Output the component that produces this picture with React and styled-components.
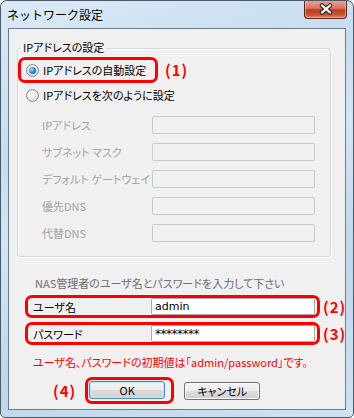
import React from 'react'
import styled, { createGlobalStyle } from 'styled-components'

const GlobalStyle = createGlobalStyle`
  html, body {
    margin: 0;
    padding: 0;
    background: #ffffff;
  }
  body {
    font-family: "Noto Sans CJK JP", "Noto Sans", sans-serif;
  }
`

const Window = styled.div`
  width: 354px;
  height: 418px;
  box-sizing: border-box;
  border: 1px solid #4d5966;
  border-radius: 7px 7px 5px 5px;
  background: linear-gradient(160deg, #dbeaf7 0%, #c6dcef 30%, #d4e6f5 45%, #bfd6ec 70%, #cfe2f3 100%);
  display: flex;
  flex-direction: column;
  overflow: hidden;
`

const TitleBar = styled.div`
  height: 27px;
  display: flex;
  justify-content: space-between;
  align-items: center;
  padding-left: 6px;
  padding-right: 6px;
`

const Title = styled.div`
  font-size: 12px;
  color: #000;
  line-height: 14px;
`

const CloseButton = styled.div`
  align-self: flex-start;
  margin-top: -1px;
  width: 43px;
  height: 19px;
  box-sizing: border-box;
  border: 1px solid #5b2419;
  border-top: none;
  border-radius: 0 0 4px 4px;
  background: linear-gradient(180deg, #eaa592 0%, #d9765e 45%, #c03c22 55%, #c5512f 80%, #e0845f 100%);
  display: flex;
  align-items: center;
  justify-content: center;
  box-shadow: inset 0 0 0 1px rgba(255, 220, 200, 0.5);
`

const Client = styled.div`
  flex: 1;
  margin: 0 7px 7px 7px;
  border: 1px solid #6f7d8b;
  background: #f0f0f0;
  display: flex;
  flex-direction: column;
  align-items: flex-start;
  font-size: 11px;
  font-feature-settings: "palt" 1;
`

const GroupBox = styled.div`
  position: relative;
  margin: 19px 0 0 8px;
  width: 314px;
  height: 209px;
  box-sizing: border-box;
  border: 1px solid #d3d8dc;
  border-radius: 3px;
  box-shadow: 1px 1px 0 #ffffff, inset 1px 1px 0 #ffffff;
  padding-top: 8px;
`

const Legend = styled.div`
  position: absolute;
  top: -9px;
  left: 3px;
  padding: 0 2px;
  background: #f0f0f0;
  line-height: 14px;
  color: #000;
`

const Highlight = styled.div`
  box-sizing: border-box;
  border: 3px solid #ff0000;
  border-radius: 7px;
  display: flex;
  align-items: ${p => p.$top ? 'flex-start' : 'center'};
  width: ${p => p.$w}px;
  height: ${p => p.$h}px;
  padding: ${p => p.$pad};
`

const Row = styled.div`
  display: flex;
  align-items: center;
  gap: ${p => p.$gap || 0}px;
  margin: ${p => p.$m || 0};
`

const Tag = styled.span`
  color: #ff0000;
  font-weight: bold;
  font-size: 15px;
  letter-spacing: 1px;
  line-height: 16px;
  font-feature-settings: normal;
`

const Radio = styled.span`
  position: relative;
  width: 13px;
  height: 13px;
  box-sizing: border-box;
  border-radius: 50%;
  border: 1px solid #8a8d90;
  background: radial-gradient(circle at 40% 40%, #ffffff 0%, #e8e8e8 50%, #c9c9c9 100%);
  flex: none;
  &::after {
    content: '';
    display: ${p => p.$checked ? 'block' : 'none'};
    position: absolute;
    left: 2px;
    top: 2px;
    width: 7px;
    height: 7px;
    border-radius: 50%;
    background: radial-gradient(circle at 35% 35%, #9fe0ff 0%, #2f93d8 45%, #0b4a8a 100%);
  }
`

const RadioLabel = styled.span`
  color: #000;
  line-height: 14px;
`

const FieldGrid = styled.div`
  margin-top: 14px;
  padding-left: 24px;
  display: grid;
  grid-template-columns: 110px 163px;
  grid-auto-rows: 18px;
  row-gap: 9px;
  align-items: center;
`

const FieldLabel = styled.span`
  color: ${p => p.$disabled ? '#a3a3a3' : '#000'};
  line-height: 14px;
  width: ${p => p.$w ? p.$w + 'px' : 'auto'};
  flex: none;
`

const TextBox = styled.div`
  box-sizing: border-box;
  width: ${p => p.$w}px;
  height: ${p => p.$h}px;
  border: 1px solid ${p => p.$disabled ? '#c9c9c9' : '#a9abaf'};
  border-radius: 2px;
  background: ${p => p.$disabled ? '#f0f0f0' : '#ffffff'};
  padding-left: 3px;
  display: flex;
  align-items: center;
  color: #000;
  font-family: "DejaVu Sans", "Noto Sans", sans-serif;
  font-size: ${p => p.$mask ? 12 : 11}px;
  letter-spacing: ${p => p.$mask ? '-0.5px' : '0'};
`

const Hint = styled.div`
  margin: ${p => p.$m};
  line-height: 14px;
  color: ${p => p.$red ? '#ff0000' : '#6e6e6e'};
`

const Button = styled.div`
  box-sizing: border-box;
  width: 76px;
  height: 18px;
  border: 1px solid ${p => p.$default ? '#3c8fc8' : '#707070'};
  border-radius: 3px;
  background: linear-gradient(180deg, #f4f4f4 0%, #ececec 48%, #dcdcdc 52%, #d0d0d0 100%);
  box-shadow: inset 0 0 0 1px ${p => p.$default ? '#bfe6fa' : '#fbfbfb'};
  display: flex;
  align-items: center;
  justify-content: center;
  color: #000;
  line-height: 14px;
`

const fields = ['IPアドレス', 'サブネット マスク', 'デフォルト ゲートウェイ', '優先DNS', '代替DNS']

export default function App() {
  return (
    <>
      <GlobalStyle />
      <Window>
        <TitleBar>
          <Title>ネットワーク設定</Title>
          <CloseButton>
            <svg width="16" height="12" viewBox="0 0 16 12">
              <path d="M4 2.5 L12 9.5 M12 2.5 L4 9.5" stroke="#3a2a28" strokeWidth="4.5" strokeLinecap="round" />
              <path d="M4 2.5 L12 9.5 M12 2.5 L4 9.5" stroke="#ffffff" strokeWidth="2.3" strokeLinecap="round" />
            </svg>
          </CloseButton>
        </TitleBar>
        <Client>
          <GroupBox>
            <Legend>IPアドレスの設定</Legend>
            <Row $gap={7}>
              <Highlight $w={140} $h={26} $pad="0 0 0 5px">
                <Row $gap={4}>
                  <Radio $checked />
                  <RadioLabel>IPアドレスの自動設定</RadioLabel>
                </Row>
              </Highlight>
              <Tag>(1)</Tag>
            </Row>
            <Row $gap={4} $m="5px 0 0 8px">
              <Radio />
              <RadioLabel>IPアドレスを次のように設定</RadioLabel>
            </Row>
            <FieldGrid>
              {fields.map(f => (
                <React.Fragment key={f}>
                  <FieldLabel $disabled>{f}</FieldLabel>
                  <TextBox $disabled $w={163} $h={18} />
                </React.Fragment>
              ))}
            </FieldGrid>
          </GroupBox>

          <Hint $m="19px 0 0 26px">NAS管理者のユーザ名とパスワードを入力して下さい</Hint>

          <Row $gap={3} $m="5px 0 0 16px">
            <Highlight $w={295} $h={23} $pad="0 2px 0 5px">
              <FieldLabel $w={118}>ユーザ名</FieldLabel>
              <TextBox $w={164} $h={17}>admin</TextBox>
            </Highlight>
            <Tag>(2)</Tag>
          </Row>
          <Row $gap={3} $m="4px 0 0 16px">
            <Highlight $w={295} $h={23} $pad="0 2px 0 5px">
              <FieldLabel $w={118}>パスワード</FieldLabel>
              <TextBox $mask $w={164} $h={17}>********</TextBox>
            </Highlight>
            <Tag>(3)</Tag>
          </Row>

          <Hint $red $m="10px 0 0 24px">ユーザ名、パスワードの初期値は「admin/password」です。</Hint>

          <Row $m="8px 0 0 44px">
            <Tag>(4)</Tag>
            <Row $m="0 10px 0 9px">
              <Highlight $top $w={89} $h={27} $pad="1px 0 0 1px">
                <Button $default>OK</Button>
              </Highlight>
            </Row>
            <Button>キャンセル</Button>
          </Row>
        </Client>
      </Window>
    </>
  )
}
